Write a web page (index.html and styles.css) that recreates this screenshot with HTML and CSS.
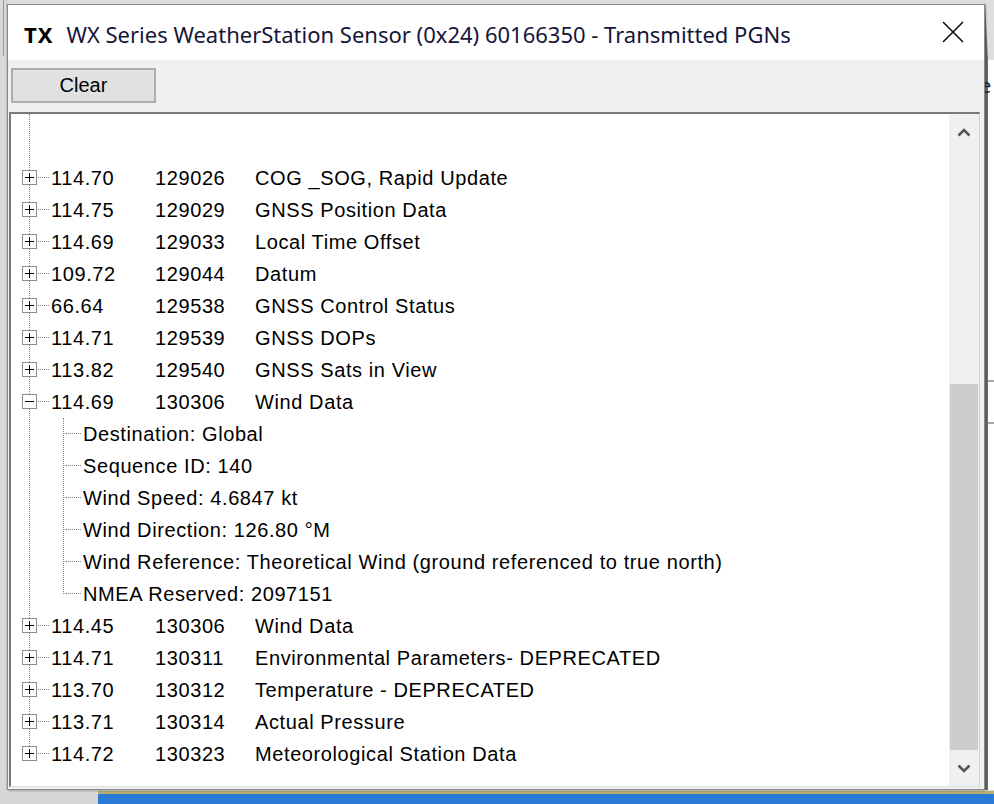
FILE: index.html
```html
<!DOCTYPE html>
<html>
<head>
<meta charset="utf-8">
<link rel="stylesheet" href="styles.css">
</head>
<body>
<div class="desktop">
  <div class="bg-left"></div>
  <div class="bg-right"><span class="bg-e">e</span></div>
  <div class="bg-bottom"><div class="bg-blue"></div></div>

  <div class="window">
    <div class="titlebar">
      <span class="tx">TX</span>
      <span class="title">WX Series WeatherStation Sensor (0x24) 60166350 - Transmitted PGNs</span>
      <svg class="close" width="24" height="24" viewBox="0 0 24 24"><path d="M2 2 L22 22 M22 2 L2 22" stroke="#111" stroke-width="1.6" fill="none"/></svg>
    </div>
    <div class="toolbar">
      <button class="btn">Clear</button>
    </div>
    <div class="panel">
      <div class="tree">
        <div class="rows">
          <div class="row"><span class="exp plus"></span><span class="c1">114.70</span><span class="c2">129026</span><span class="c3">COG _SOG, Rapid Update</span></div>
          <div class="row"><span class="exp plus"></span><span class="c1">114.75</span><span class="c2">129029</span><span class="c3">GNSS Position Data</span></div>
          <div class="row"><span class="exp plus"></span><span class="c1">114.69</span><span class="c2">129033</span><span class="c3">Local Time Offset</span></div>
          <div class="row"><span class="exp plus"></span><span class="c1">109.72</span><span class="c2">129044</span><span class="c3">Datum</span></div>
          <div class="row"><span class="exp plus"></span><span class="c1">66.64</span><span class="c2">129538</span><span class="c3">GNSS Control Status</span></div>
          <div class="row"><span class="exp plus"></span><span class="c1">114.71</span><span class="c2">129539</span><span class="c3">GNSS DOPs</span></div>
          <div class="row"><span class="exp plus"></span><span class="c1">113.82</span><span class="c2">129540</span><span class="c3">GNSS Sats in View</span></div>
          <div class="row"><span class="exp minus"></span><span class="c1">114.69</span><span class="c2">130306</span><span class="c3">Wind Data</span></div>
          <div class="children">
            <div class="row child">Destination: Global</div>
            <div class="row child">Sequence ID: 140</div>
            <div class="row child">Wind Speed: 4.6847 kt</div>
            <div class="row child">Wind Direction: 126.80 °M</div>
            <div class="row child">Wind Reference: Theoretical Wind (ground referenced to true north)</div>
            <div class="row child">NMEA Reserved: 2097151</div>
          </div>
          <div class="row"><span class="exp plus"></span><span class="c1">114.45</span><span class="c2">130306</span><span class="c3">Wind Data</span></div>
          <div class="row"><span class="exp plus"></span><span class="c1">114.71</span><span class="c2">130311</span><span class="c3">Environmental Parameters- DEPRECATED</span></div>
          <div class="row"><span class="exp plus"></span><span class="c1">113.70</span><span class="c2">130312</span><span class="c3">Temperature - DEPRECATED</span></div>
          <div class="row"><span class="exp plus"></span><span class="c1">113.71</span><span class="c2">130314</span><span class="c3">Actual Pressure</span></div>
          <div class="row"><span class="exp plus"></span><span class="c1">114.72</span><span class="c2">130323</span><span class="c3">Meteorological Station Data</span></div>
        </div>
      </div>
      <div class="scrollbar">
        <div class="sb-btn"><svg width="14" height="9" viewBox="0 0 14 9"><path d="M1.5 7.5 L7 2 L12.5 7.5" stroke="#555" stroke-width="2.6" fill="none"/></svg></div>
        <div class="sb-track"><div class="sb-thumb"></div></div>
        <div class="sb-btn"><svg width="14" height="9" viewBox="0 0 14 9"><path d="M1.5 1.5 L7 7 L12.5 1.5" stroke="#555" stroke-width="2.6" fill="none"/></svg></div>
      </div>
    </div>
  </div>
</div>
</body>
</html>
```
FILE: styles.css
```css
* { box-sizing: border-box; }
html, body { margin: 0; padding: 0; }
body {
  width: 994px;
  height: 804px;
  overflow: hidden;
  background: #dcdcdc;
  font-family: "Liberation Sans", Arial, sans-serif;
}
.desktop {
  position: relative;
  width: 994px;
  height: 804px;
}
.bg-left {
  position: absolute;
  left: 0; top: 0;
  width: 7px; height: 790px;
  background: #d8d8d8;
  border-right: 1px solid #c4c4c4;
}
.bg-left::before {
  content: "";
  position: absolute;
  left: 3px; top: 0;
  width: 1px; height: 56px;
  background: #9a9a9a;
}
.bg-right {
  position: absolute;
  left: 985px; top: 0;
  width: 9px; height: 792px;
  background: #ffffff;
  border-top: 60px solid #dedede;
  border-left: 3px solid #6a6a6a;
}
.bg-right::after {
  content: "";
  position: absolute;
  left: 0; right: 0; top: 320px;
  height: 40px;
  border-top: 2px solid #a8a8a8;
  border-bottom: 2px solid #a8a8a8;
}
.bg-e {
  position: absolute;
  left: -8px; top: 12px;
  font-family: "Noto Sans", sans-serif;
  font-size: 20px;
  color: #222240;
}
.bg-bottom {
  position: absolute;
  left: 0; top: 790px;
  width: 994px; height: 14px;
  background: #d6d6d6;
  display: flex;
  justify-content: flex-end;
}
.bg-blue {
  width: 896px;
  height: 14px;
  border-top: 3px solid #b8b070;
  background: #2a7ad8;
  margin-top: 1px;
}

.window {
  position: absolute;
  left: 7px; top: 4px;
  width: 978px; height: 786px;
  background: #f0f0f0;
  border: 1px solid #8a8a8a;
  display: flex;
  flex-direction: column;
  box-shadow: 1px 1px 2px rgba(0,0,0,0.25);
}
.titlebar {
  height: 55px;
  flex: none;
  background: #ffffff;
  display: flex;
  align-items: center;
  padding-left: 16px;
  padding-top: 2px;
  font-family: "Noto Sans", sans-serif;
}
.tx {
  font-weight: bold;
  font-size: 22px;
  letter-spacing: 1px;
  color: #000;
  margin-right: 13px;
}
.title {
  font-size: 22px;
  color: #15153a;
  flex: 1;
}
.close {
  margin-right: 19px;
  margin-top: -4px;
}
.toolbar {
  height: 52px;
  flex: none;
  padding: 8px 0 0 3px;
}
.btn {
  width: 145px;
  height: 35px;
  background: #e1e1e1;
  border: 2px solid #adadad;
  font-family: "Liberation Sans", Arial, sans-serif;
  font-size: 20px;
  color: #000;
  padding: 0;
  display: block;
}
.panel {
  flex: 1;
  margin: 0 4px 2px 1px;
  background: #ffffff;
  border-top: 2px solid #7a7a7a;
  border-left: 2px solid #7a7a7a;
  border-right: 1px solid #d0d0d0;
  border-bottom: 1px solid #e0e0e0;
  display: flex;
}
.tree {
  flex: 1;
  padding-top: 48px;
  font-size: 20px;
  letter-spacing: 0.6px;
  color: #000;
}
.rows {
  position: relative;
}
.rows::before {
  content: "";
  position: absolute;
  left: 18px;
  top: -48px;
  bottom: 16px;
  border-left: 1px dotted #8a8a8a;
}
.row {
  position: relative;
  height: 32px;
  display: flex;
  align-items: center;
  white-space: nowrap;
}
.exp {
  position: relative;
  z-index: 1;
  width: 15px;
  height: 15px;
  margin-left: 11px;
  margin-right: 14px;
  margin-top: -1px;
  border: 1px solid #8c8c8c;
  background: #ffffff;
  flex: none;
}
.exp::before {
  content: "";
  position: absolute;
  left: 2px; top: 5.5px;
  width: 9px; height: 1.8px;
  background: #000;
}
.plus::after {
  content: "";
  position: absolute;
  left: 5.6px; top: 2px;
  width: 1.8px; height: 9px;
  background: #000;
}
.row:not(.child) .exp + .c1::before {
  content: "";
  position: absolute;
  left: 27px;
  width: 11px;
  top: 15px;
  border-top: 1px dotted #8a8a8a;
}
.c1 { width: 104px; flex: none; }
.c2 { width: 100px; flex: none; }
.c3 { flex: none; }
.children {
  position: relative;
}
.children::before {
  content: "";
  position: absolute;
  left: 52px;
  top: 0;
  bottom: 16px;
  border-left: 1px dotted #8a8a8a;
}
.child {
  padding-left: 72px;
}
.child::before {
  content: "";
  position: absolute;
  left: 54px;
  width: 16px;
  top: 15px;
  border-top: 1px dotted #8a8a8a;
}
.scrollbar {
  width: 30px;
  flex: none;
  background: #f0f0f0;
  display: flex;
  flex-direction: column;
}
.sb-btn {
  height: 36px;
  flex: none;
  display: flex;
  align-items: center;
  justify-content: center;
}
.sb-track {
  flex: 1;
  display: flex;
  flex-direction: column;
  justify-content: flex-end;
  padding: 0 1px;
}
.sb-thumb {
  height: 366px;
  background: #cdcdcd;
}
```
